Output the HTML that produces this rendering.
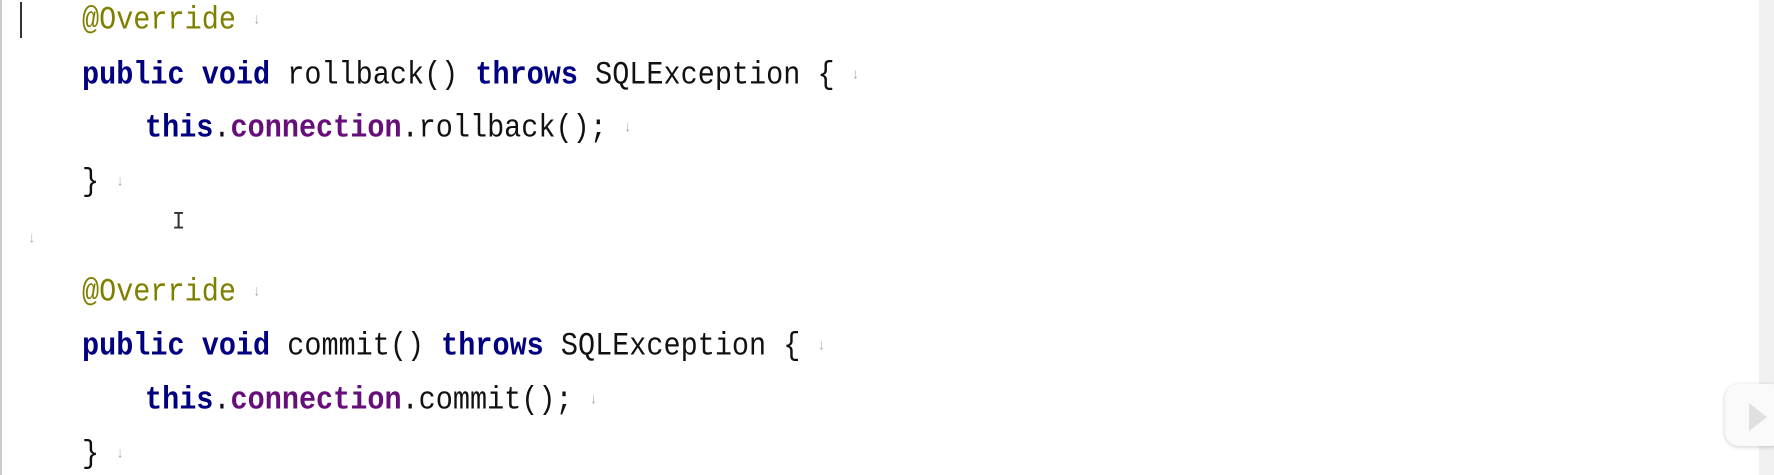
<!DOCTYPE html>
<html><head><style>
body{margin:0;width:1774px;height:475px;background:#fff;overflow:hidden;position:relative;font-family:"Liberation Mono","DejaVu Sans Mono",monospace;}
.l{position:absolute;font-size:28.5px;line-height:34px;white-space:pre;color:#111;transform:scaleY(1.15);transform-origin:left center}
.k{color:#000080;font-weight:bold}
.a{color:#808000}
.f{color:#660e7a;font-weight:bold}
.m{color:#aaa;font-size:13px;vertical-align:middle}
</style></head><body>
<div style="position:absolute;left:0;top:0;width:2px;height:475px;background:#ccc"></div>
<div style="position:absolute;left:20px;top:2px;width:2px;height:36px;background:#333"></div>
<div class="l a" style="left:82px;top:3px">@Override <span class="m">↓</span></div>
<div class="l" style="left:82px;top:58px"><span class="k">public void</span> rollback() <span class="k">throws</span> SQLException { <span class="m">↓</span></div>
<div class="l" style="left:145px;top:111px"><span class="k">this</span>.<span class="f">connection</span>.rollback(); <span class="m">↓</span></div>
<div class="l" style="left:82px;top:165px">} <span class="m">↓</span></div>
<div class="l" style="left:172px;top:206px;font-size:22px;color:#333">I</div>
<div class="l m" style="left:28px;top:222px">↓</div>
<div class="l a" style="left:82px;top:275px">@Override <span class="m">↓</span></div>
<div class="l" style="left:82px;top:329px"><span class="k">public void</span> commit() <span class="k">throws</span> SQLException { <span class="m">↓</span></div>
<div class="l" style="left:145px;top:383px"><span class="k">this</span>.<span class="f">connection</span>.commit(); <span class="m">↓</span></div>
<div class="l" style="left:82px;top:437px">} <span class="m">↓</span></div>
<div style="position:absolute;left:1759px;top:0;width:15px;height:475px;background:#f0f0f0"></div>
<div style="position:absolute;left:1725px;top:384px;width:60px;height:62px;border-radius:14px;background:#fafafa;box-shadow:0 1px 4px rgba(0,0,0,.2)"></div>
<div style="position:absolute;left:1749px;top:403px;width:0;height:0;border-left:18px solid #e0e0e0;border-top:14px solid transparent;border-bottom:14px solid transparent"></div>
</body></html>
